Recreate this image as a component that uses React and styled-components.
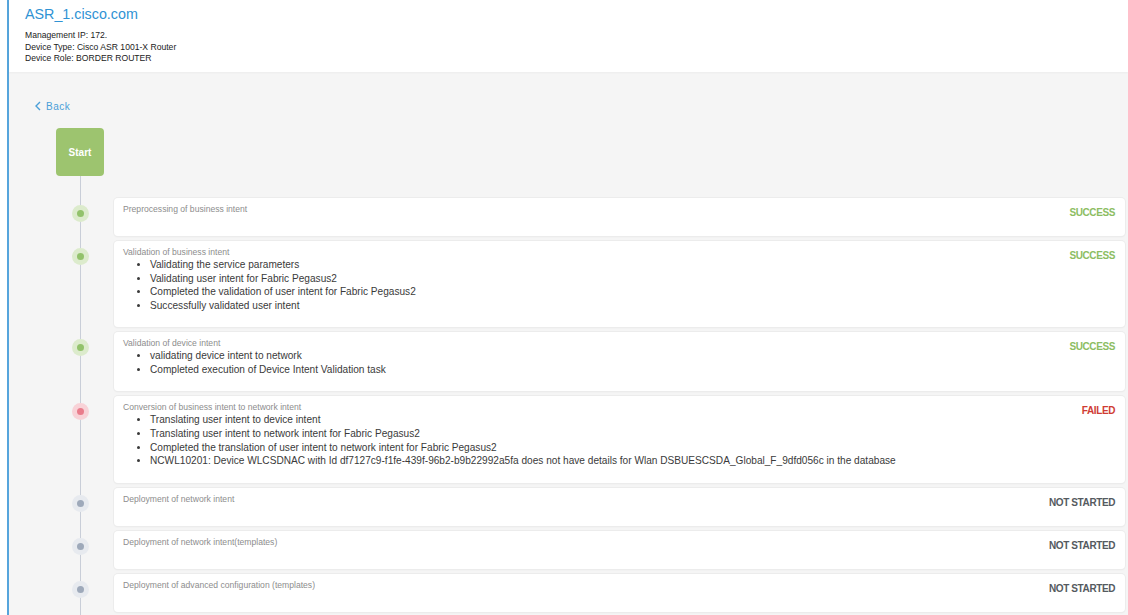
import React from "react"
import styled, { createGlobalStyle } from "styled-components"

const GlobalStyle = createGlobalStyle`
  html, body {
    margin: 0;
    padding: 0;
    background: #ffffff;
    font-family: "Liberation Sans", Arial, sans-serif;
  }
`

const steps = [
  { title: "Preprocessing of business intent", status: "success", items: [] },
  {
    title: "Validation of business intent",
    status: "success",
    items: [
      "Validating the service parameters",
      "Validating user intent for Fabric Pegasus2",
      "Completed the validation of user intent for Fabric Pegasus2",
      "Successfully validated user intent",
    ],
  },
  {
    title: "Validation of device intent",
    status: "success",
    items: [
      "validating device intent to network",
      "Completed execution of Device Intent Validation task",
    ],
  },
  {
    title: "Conversion of business intent to network intent",
    status: "failed",
    items: [
      "Translating user intent to device intent",
      "Translating user intent to network intent for Fabric Pegasus2",
      "Completed the translation of user intent to network intent for Fabric Pegasus2",
      "NCWL10201: Device WLCSDNAC with Id df7127c9-f1fe-439f-96b2-b9b22992a5fa does not have details for Wlan DSBUESCSDA_Global_F_9dfd056c in the database",
    ],
  },
  { title: "Deployment of network intent", status: "idle", items: [] },
  { title: "Deployment of network intent(templates)", status: "idle", items: [] },
  { title: "Deployment of advanced configuration (templates)", status: "idle", items: [] },
]

const statusText = { success: "SUCCESS", failed: "FAILED", idle: "NOT STARTED" }
const statusColor = { success: "#8cbd62", failed: "#cf3c34", idle: "#555a60" }
const dotOuter = { success: "#dcebcc", failed: "#f8d2d7", idle: "#e7eaef" }
const dotInner = { success: "#92c26b", failed: "#e97c8b", idle: "#9ea9ba" }

export default function App() {
  return (
    <Panel>
      <GlobalStyle />
      <Header>
        <DeviceName>ASR_1.cisco.com</DeviceName>
        <Meta>Management IP: 172.</Meta>
        <Meta>Device Type: Cisco ASR 1001-X Router</Meta>
        <Meta>Device Role: BORDER ROUTER</Meta>
      </Header>
      <Content>
        <BackLink>
          <svg width="8" height="10" viewBox="0 0 8 10">
            <path d="M6 1 L2 5 L6 9" fill="none" stroke="#4a9fd8" strokeWidth="1.4" />
          </svg>
          Back
        </BackLink>
        <Timeline>
          <StartBox>Start</StartBox>
          <Steps>
            {steps.map(step => (
              <Step key={step.title}>
                <Gutter>
                  <Dot $status={step.status} />
                </Gutter>
                <Card>
                  <CardBody>
                    <StepTitle>{step.title}</StepTitle>
                    {step.items.length > 0 && (
                      <Items>
                        {step.items.map(item => (
                          <li key={item}>{item}</li>
                        ))}
                      </Items>
                    )}
                  </CardBody>
                  <Status $status={step.status}>{statusText[step.status]}</Status>
                </Card>
              </Step>
            ))}
          </Steps>
        </Timeline>
      </Content>
    </Panel>
  )
}

const Panel = styled.div`
  margin-left: 7px;
  border-left: 2px solid #56a5dc;
  min-height: 615px;
  background: #f5f5f5;
`

const Header = styled.div`
  background: #ffffff;
  height: 72px;
  box-sizing: border-box;
  padding: 5px 16px 0;
  box-shadow: 0 1px 2px rgba(0, 0, 0, 0.04);
`

const DeviceName = styled.div`
  color: #2f93d4;
  font-size: 14.3px;
  line-height: 18px;
  margin-bottom: 7px;
`

const Meta = styled.div`
  font-size: 8.6px;
  line-height: 11.5px;
  color: #222;
`

const Content = styled.div`
  padding: 27px 3px 0 25px;
`

const BackLink = styled.div`
  display: flex;
  align-items: center;
  gap: 4px;
  color: #4a9fd8;
  font-size: 10px;
  letter-spacing: 0.5px;
  height: 14px;
`

const Timeline = styled.div`
  position: relative;
  margin-top: 15px;
  &::before {
    content: "";
    position: absolute;
    left: 46px;
    top: 40px;
    bottom: -20px;
    width: 1px;
    background: #c9ced8;
  }
`

const StartBox = styled.div`
  position: relative;
  margin-left: 22px;
  width: 48px;
  height: 48px;
  border-radius: 4px;
  background: #9dc46f;
  color: #ffffff;
  font-weight: bold;
  font-size: 10px;
  display: flex;
  align-items: center;
  justify-content: center;
`

const Steps = styled.div`
  display: flex;
  flex-direction: column;
  gap: 5px;
  margin-top: 22px;
`

const Step = styled.div`
  display: flex;
  gap: 10px;
`

const Gutter = styled.div`
  width: 48px;
  margin-left: 22px;
  flex-shrink: 0;
  display: flex;
  justify-content: center;
  padding-top: 7px;
`

const Dot = styled.div`
  position: relative;
  width: 17px;
  height: 17px;
  border-radius: 50%;
  background: ${p => dotOuter[p.$status]};
  display: flex;
  align-items: center;
  justify-content: center;
  &::after {
    content: "";
    width: 7px;
    height: 7px;
    border-radius: 50%;
    background: ${p => dotInner[p.$status]};
  }
`

const Card = styled.div`
  flex: 1;
  display: flex;
  min-height: 38px;
  box-sizing: border-box;
  background: #ffffff;
  border-radius: 4px;
  box-shadow: 0 0 0 1px #ececec, 0 1px 2px rgba(0, 0, 0, 0.06);
  padding: 6px 10px 14.5px 9px;
`

const CardBody = styled.div`
  flex: 1;
`

const StepTitle = styled.div`
  font-size: 8.6px;
  line-height: 11px;
  color: #8d8d8d;
`

const Items = styled.ul`
  margin: 0;
  padding-left: 27px;
  font-size: 10.12px;
  line-height: 13.7px;
  color: #3a3a3a;
`

const Status = styled.div`
  font-size: 10px;
  font-weight: bold;
  letter-spacing: -0.4px;
  line-height: 12px;
  padding-top: 3px;
  color: ${p => statusColor[p.$status]};
`
